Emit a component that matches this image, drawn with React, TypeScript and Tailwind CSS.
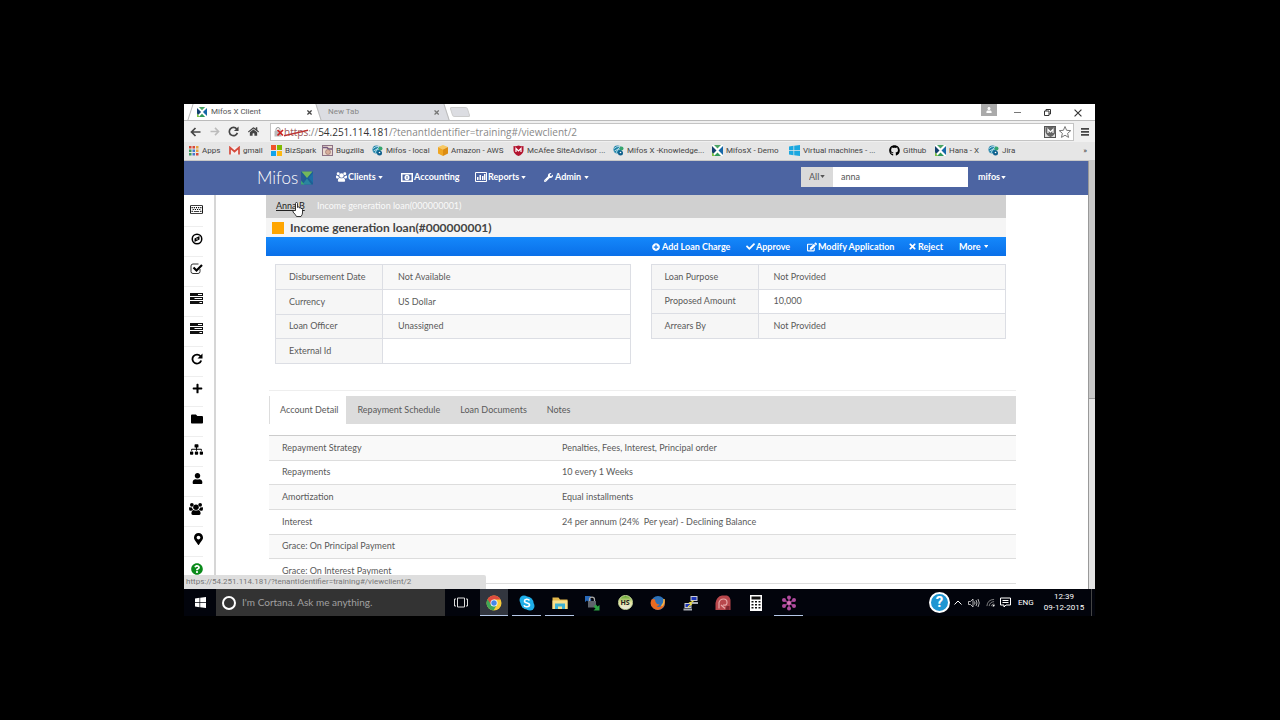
import { useState } from 'react';
import type { ReactNode } from 'react';
import {
  FaCheck,
  FaEdit,
  FaFolder,
  FaGithub,
  FaHome,
  FaMapMarkerAlt,
  FaPlus,
  FaPlusCircle,
  FaQuestionCircle,
  FaRegKeyboard,
  FaSitemap,
  FaTimes,
  FaUser,
  FaWrench,
} from 'react-icons/fa';

/* ---------- small drawings ---------- */

function MifosMark({ className = 'size-[11px]' }: { className?: string }) {
  return (
    <svg viewBox="0 0 22 22" className={`shrink-0 ${className}`} aria-hidden="true">
      <rect width="22" height="22" fill="#fff" />
      <path d="M4 0h14l-7 7z" fill="#4aa564" />
      <path d="M0 2l9 9-9 9z" fill="#12406e" />
      <path d="M22 2l-9 9 9 9z" fill="#1668a8" />
      <path d="M4 22h14l-7-7z" fill="#2f9a5b" />
      <path d="M0 14l6 8H0z" fill="#7cc243" />
    </svg>
  );
}

function LogoMark() {
  return (
    <svg viewBox="0 0 24 26" className="w-3 h-[14px]" aria-hidden="true">
      <rect width="24" height="26" fill="#1d5f94" />
      <path d="M1 0h22L12 13z" fill="#74b85a" />
      <path d="M0 2l9 11-9 10z" fill="#2a5a94" />
      <path d="M24 3l-9 10 9 10z" fill="#1d6ea6" />
      <path d="M12 14l9 12H3z" fill="#2b85a0" />
      <path d="M0 18l7 8H0z" fill="#3fa872" />
    </svg>
  );
}

function Globe() {
  return (
    <svg viewBox="0 0 22 22" className="size-[11px] shrink-0" aria-hidden="true">
      <circle cx="9" cy="9" r="8" fill="#1b7fa6" />
      <path d="M2 7q5-5 12-4M3 12q6-5 13-4M6 16q3-8 8-12" stroke="#d8f1f5" strokeWidth="1.6" fill="none" />
      <circle cx="17" cy="7" r="4" fill="#36a56e" />
      <circle cx="15" cy="16" r="5" fill="#0f5f8c" />
      <circle cx="15" cy="15" r="1.6" fill="#fff" />
    </svg>
  );
}

function AppsGrid() {
  const colors = ['#d64937', '#d64937', '#e8a33d', '#3c9a5f', '#4678d0', '#e8a33d', '#3c9a5f', '#4678d0', '#d64937'];
  return (
    <svg viewBox="0 0 20 20" className="size-[10px] shrink-0" aria-hidden="true">
      {colors.map((c, i) => (
        <rect key={i} x={(i % 3) * 7} y={Math.floor(i / 3) * 7} width="5" height="5" fill={c} />
      ))}
    </svg>
  );
}

function Gmail() {
  return (
    <svg viewBox="0 0 22 18" className="w-[11px] h-[9px] shrink-0" aria-hidden="true">
      <path d="M2 2h18v15H2z" fill="#f4eeee" />
      <path d="M2 17V3l9 8 9-8v14" fill="none" stroke="#d54b3d" strokeWidth="3.4" />
    </svg>
  );
}

function MicrosoftSquares() {
  return (
    <svg viewBox="0 0 22 22" className="size-[11px] shrink-0" aria-hidden="true">
      <path d="M0 0h10v10H0z" fill="#f0532b" />
      <path d="M12 0h10v10H12z" fill="#7fba00" />
      <path d="M0 12h10v10H0z" fill="#12a3ea" />
      <path d="M12 12h10v10H12z" fill="#fdb813" />
    </svg>
  );
}

function BugzillaIcon() {
  return (
    <svg viewBox="0 0 22 22" className="size-[11px] shrink-0" aria-hidden="true">
      <rect x="1" y="1" width="20" height="20" fill="#ead9cf" stroke="#8d7284" strokeWidth="2" />
      <path d="M2 5h8l3 3h7" stroke="#74597f" strokeWidth="3" fill="none" />
      <circle cx="12" cy="14" r="5" fill="#d8ae9c" stroke="#7e5a5a" />
    </svg>
  );
}

function AmazonCube() {
  return (
    <svg viewBox="0 0 20 22" className="w-[10px] h-[11px] shrink-0" aria-hidden="true">
      <path d="M10 0l10 4-10 5L0 4z" fill="#f8c860" />
      <path d="M0 4l10 5v13L0 17z" fill="#f0a623" />
      <path d="M20 4L10 9v13l10-5z" fill="#dd8d12" />
    </svg>
  );
}

function McAfee({ fill = '#b3152f' }: { fill?: string }) {
  return (
    <svg viewBox="0 0 22 22" className="size-[11px] shrink-0" aria-hidden="true">
      <path d="M1 2q5 1 10-1 5 2 10 1v10q-2 7-10 10Q3 19 1 12z" fill={fill} />
      <path d="M6 14V7l5 5 5-5v7" stroke="#fff" strokeWidth="2.4" fill="none" />
    </svg>
  );
}

function WindowsFlag({ className }: { className: string }) {
  return (
    <svg viewBox="0 0 22 22" className={`shrink-0 ${className}`} fill="currentColor" aria-hidden="true">
      <path d="M0 3l9-1.3V10.4H0zM10.4 1.5L22 0v10.4H10.4zM0 11.8h9v8.6L0 19zM10.4 11.8H22V22l-11.6-1.6z" />
    </svg>
  );
}

function Caret() {
  return (
    <svg viewBox="0 0 6 4" className="w-[5px] h-[3px] ml-px" fill="currentColor" aria-hidden="true">
      <path d="M0 0h6L3 4z" />
    </svg>
  );
}

function Group({ className }: { className: string }) {
  return (
    <svg viewBox="0 0 30 26" className={className} fill="currentColor" aria-hidden="true">
      <circle cx="6" cy="4" r="4" />
      <circle cx="24" cy="4" r="4" />
      <circle cx="15" cy="9" r="6" />
      <path d="M0 9q2 0 6 1 1 3 3 5-3 0-4 2H2q-2-1-2-4zM30 9q-2 0-6 1-1 3-3 5 3 0 4 2h3q2-1 2-4zM10 15q5 3 10 0 5 1 5 8 0 3-3 3H8q-3 0-3-3 0-7 5-8z" />
    </svg>
  );
}

function Banknote() {
  return (
    <svg viewBox="0 0 24 18" className="w-[12px] h-[9px]" aria-hidden="true">
      <path d="M1.500 1.500h21v15h-21z" fill="none" stroke="currentColor" strokeWidth="3" />
      <ellipse cx="12" cy="9" rx="5" ry="5.500" fill="currentColor" />
      <path d="M12 6v6" stroke="#4c64a2" strokeWidth="2" />
    </svg>
  );
}

function BarChart() {
  return (
    <svg viewBox="0 0 24 20" className="w-[12px] h-[10px]" aria-hidden="true">
      <path d="M1 1h22v18H1z" fill="none" stroke="currentColor" strokeWidth="2" />
      <path d="M4 10h3v6H4zM9 6h3v10H9zM14 8h3v8h-3zM18 4h3v12h-3z" fill="currentColor" />
    </svg>
  );
}

function Compass() {
  return (
    <svg viewBox="0 0 24 24" className="size-[12px]" aria-hidden="true">
      <circle cx="12" cy="12" r="9.500" fill="none" stroke="#000" strokeWidth="3" />
      <path d="M17 6v7l-10 5v-7z" fill="#000" />
      <circle cx="12" cy="12" r="1.500" fill="#fff" />
    </svg>
  );
}

function Tasks() {
  return (
    <svg viewBox="0 0 26 22" className="w-[13px] h-[11px]" aria-hidden="true">
      <path d="M0 0h26v6H0zM0 8h26v6H0zM0 16h26v6H0z" fill="#111" />
      <path d="M16 2h8v2h-8zM9 10h15v2H9zM19 18h5v2h-5z" fill="#fff" />
    </svg>
  );
}

function CheckBoxIcon() {
  return (
    <svg viewBox="0 0 26 22" className="w-[13px] h-[11px]" fill="none" aria-hidden="true">
      <path d="M20 12v5q0 4-4 4H6q-4 0-4-4V6q0-4 4-4h11" stroke="#333" strokeWidth="2" />
      <path d="M7 9l6 6L24 4" stroke="#000" strokeWidth="4.4" />
    </svg>
  );
}

function Repeat({ className = 'size-[12px]' }: { className?: string }) {
  return (
    <svg viewBox="0 0 24 24" className={className} aria-hidden="true">
      <path d="M19 6.5A9 9 0 1 0 20.5 15" fill="none" stroke="currentColor" strokeWidth="3.6" />
      <path d="M23 1v10H13z" fill="currentColor" />
    </svg>
  );
}

function Arrow({ className }: { className: string }) {
  return (
    <svg viewBox="0 0 22 20" className={className} fill="none" stroke="currentColor" strokeWidth="3.4" aria-hidden="true">
      <path d="M21 10H3M11 2l-8 8 8 8" />
    </svg>
  );
}

function HandCursor() {
  return (
    <svg viewBox="0 0 22 30" className="absolute left-4 top-[2px] w-[11px] h-[15px]" aria-hidden="true">
      <path
        d="M7 17V3q0-2 2-2t2 2v8q1-2 3-1 1 0 1 2 2-1 3 1 3-1 3 2v7q0 3-3 7H9q-2-4-7-9-1-3 2-3z"
        fill="#fff"
        stroke="#222"
        strokeWidth="1.8"
      />
    </svg>
  );
}

/* ---------- browser chrome ---------- */

function TabStrip() {
  return (
    <div className="flex h-4 items-stretch bg-white font-['Roboto',sans-serif] text-[8px] leading-4 text-[#555]">
      <div className="flex w-[134px] items-center pr-[5px]">
        <span className="ml-[6px] mr-[6px] h-full w-px -skew-x-[18deg] bg-[#bbb]" />
        <MifosMark className="size-[10px]" />
        <span className="ml-[4px] flex-1">Mifos X Client</span>
        <button aria-label="Close Mifos X Client" className="text-[#444]">
          <FaTimes className="size-[7px]" />
        </button>
      </div>
      <div className="flex w-[129px] skew-x-[18deg] items-center border-x border-[#bbb] bg-[#dcdde2] pl-[9px] pr-[6px]">
        <span className="flex-1 skew-x-[-18deg] text-[#888]">New Tab</span>
        <button aria-label="Close New Tab" className="skew-x-[-18deg] text-[#777]">
          <FaTimes className="size-[7px]" />
        </button>
      </div>
      <button aria-label="New tab" className="my-[3px] ml-[4px] w-[18px] skew-x-[18deg] rounded-[2px] border border-[#ccc] bg-[#dcdde2]" />
      <div className="ml-auto flex items-start text-[#333]">
        <button aria-label="Profile" className="flex h-3 w-4 items-center justify-center bg-[#aaa] text-white">
          <FaUser className="size-[6px]" />
        </button>
        <button aria-label="Minimize" className="ml-[17px] mt-2 h-px w-[7px] bg-[#777]" />
        <button aria-label="Restore" className="ml-[23px] mt-[5px]">
          <svg viewBox="0 0 14 14" className="size-[7px]" fill="none" stroke="currentColor" strokeWidth="2">
            <path d="M1 4h9v9H1zM4 4V1h9v9h-3" />
          </svg>
        </button>
        <button aria-label="Close window" className="ml-[23px] mr-[13px] mt-[5px]">
          <svg viewBox="0 0 14 14" className="size-[8px]" stroke="currentColor" strokeWidth="2">
            <path d="M1 1l12 12M13 1L1 13" />
          </svg>
        </button>
      </div>
    </div>
  );
}

function Toolbar() {
  return (
    <div className="flex h-[22px] items-center border-t border-[#bbb] bg-[#f0f0f0] text-[#444]">
      <div className="flex w-[86px] items-center justify-between pl-[6px] pr-[11px]">
        <button aria-label="Back"><Arrow className="w-[11px] h-[10px]" /></button>
        <button aria-label="Forward"><Arrow className="w-[10px] h-[9px] rotate-180 text-[#bbb]" /></button>
        <button aria-label="Reload"><Repeat className="size-[11px]" /></button>
        <button aria-label="Home"><FaHome className="size-[11px]" /></button>
      </div>
      <div className="flex h-[18px] flex-1 items-center border border-[#c4c4c4] bg-white pl-[3px] pr-[2px]">
        <svg viewBox="0 0 20 20" className="size-[10px]" aria-hidden="true">
          <path d="M4 8V5q0-4 4-4t4 4v3" fill="none" stroke="#999" strokeWidth="2" />
          <rect x="1" y="8" width="14" height="11" fill="#bbb" />
          <path d="M7 6l11 11M18 6L7 17" stroke="#c22" strokeWidth="3.500" />
        </svg>
        <p className="flex-1 whitespace-nowrap text-[10px] leading-4 text-[#888]">
          <span className="relative text-[#9b5a5a]">
            https
            <svg viewBox="0 0 26 8" className="absolute inset-x-0 top-[4px] h-[8px] w-full" aria-hidden="true">
              <path d="M0 7L26 1" stroke="#b33" strokeWidth="1.4" />
            </svg>
          </span>
          ://<span className="text-[#333]">54.251.114.181</span>/?tenantIdentifier=training#/viewclient/2
        </p>
        <span className="flex size-[12px] items-center justify-center border border-[#555] bg-[#ddd]"><McAfee fill="#666" /></span>
        <svg viewBox="0 0 24 24" className="ml-[3px] size-[12px]" fill="none" stroke="#777" strokeWidth="2" aria-hidden="true">
          <path d="M12 1l3.200 7.600 8.300.7-6.300 5.400 1.900 8.100L12 18.500l-7.100 4.300 1.900-8.100L.5 9.300l8.300-.7z" />
        </svg>
      </div>
      <button aria-label="Browser menu" className="ml-[7px] mr-[6px]">
        <svg viewBox="0 0 16 16" className="size-[8px]" fill="currentColor">
          <path d="M0 0h16v3.500H0zM0 6h16v3.500H0zM0 12h16v3.500H0z" />
        </svg>
      </button>
    </div>
  );
}

const bookmarks: { label: string; icon: ReactNode; width: string }[] = [
  { label: 'Apps', icon: <AppsGrid />, width: 'w-[40px]' },
  { label: 'gmail', icon: <Gmail />, width: 'w-[42px]' },
  { label: 'BizSpark', icon: <MicrosoftSquares />, width: 'w-[51px]' },
  { label: 'Bugzilla', icon: <BugzillaIcon />, width: 'w-[50px]' },
  { label: 'Mifos - local', icon: <Globe />, width: 'w-[66px]' },
  { label: 'Amazon - AWS', icon: <AmazonCube />, width: 'w-[75px]' },
  { label: 'McAfee SiteAdvisor ...', icon: <McAfee />, width: 'w-[100px]' },
  { label: 'Mifos X -Knowledge...', icon: <Globe />, width: 'w-[99px]' },
  { label: 'MifosX - Demo', icon: <MifosMark />, width: 'w-[77px]' },
  { label: 'Virtual machines - ...', icon: <WindowsFlag className="size-[11px] text-[#1ba8e0]" />, width: 'w-[100px]' },
  { label: 'Github', icon: <FaGithub className="size-[11px] shrink-0 text-black" />, width: 'w-[46px]' },
  { label: 'Hana - X', icon: <MifosMark />, width: 'w-[53px]' },
  { label: 'Jira', icon: <Globe />, width: 'w-[40px]' },
];

function BookmarksBar() {
  return (
    <nav
      aria-label="Bookmarks"
      className="flex h-[19px] items-center border-b border-[#c8c8c8] bg-[#e6e6e6] pb-px pl-[5px] pr-[8px] font-['Roboto',sans-serif] text-[8px] leading-3 text-[#444]"
    >
      {bookmarks.map((b) => (
        <a key={b.label} href="#" className={`flex shrink-0 items-center gap-[3px] whitespace-nowrap ${b.width}`}>
          {b.icon}
          {b.label}
        </a>
      ))}
      <button aria-label="More bookmarks" className="ml-auto">»</button>
    </nav>
  );
}

/* ---------- application ---------- */

function Navbar() {
  return (
    <header className="flex h-[34px] items-center bg-[#4c64a2] font-['Lato',sans-serif] text-[9px] leading-3 text-white">
      <a href="#" className="ml-[73px] flex w-[79px] items-center gap-[3px] text-[17px] font-light leading-5">
        Mifos
        <LogoMark />
      </a>
      <nav className="flex items-center pb-[2px] font-bold">
        <button className="flex w-[65px] items-center gap-px"><Group className="w-[11px] h-[10px]" />Clients<Caret /></button>
        <a href="#" className="flex w-[74px] items-center gap-px"><Banknote />Accounting</a>
        <button className="flex w-[69px] items-center gap-px"><BarChart />Reports<Caret /></button>
        <button className="flex items-center gap-[2px]"><FaWrench className="size-[9px]" />Admin<Caret /></button>
      </nav>
      <form className="mb-[3px] ml-auto mr-[10px] flex h-5 text-[#555]" onSubmit={(e) => e.preventDefault()}>
        <div className="relative flex w-8 items-center bg-[#dadada]">
          <select aria-label="Search scope" className="w-full appearance-none pl-[8px] outline-none">
            <option>All</option>
          </select>
          <span className="pointer-events-none absolute right-[8px]"><Caret /></span>
        </div>
        <input aria-label="Search" defaultValue="anna" className="w-[135px] bg-white px-[8px] outline-none" />
      </form>
      <button className="mb-[2px] mr-[82px] flex w-7 items-center font-bold">mifos<Caret /></button>
    </header>
  );
}

const shortcuts: { label: string; icon: ReactNode }[] = [
  { label: 'Keyboard shortcuts', icon: <FaRegKeyboard className="size-[13px]" /> },
  { label: 'Navigation', icon: <Compass /> },
  { label: 'Checker inbox', icon: <CheckBoxIcon /> },
  { label: 'Individual collection sheet', icon: <Tasks /> },
  { label: 'Collection sheet', icon: <Tasks /> },
  { label: 'Closing entries', icon: <Repeat /> },
  { label: 'Add', icon: <FaPlus className="size-[11px]" /> },
  { label: 'Accounts', icon: <FaFolder className="size-[12px]" /> },
  { label: 'Offices', icon: <FaSitemap className="size-[13px]" /> },
  { label: 'Client', icon: <FaUser className="size-[11px]" /> },
  { label: 'Groups', icon: <Group className="w-[14px] h-[12px]" /> },
  { label: 'Centers', icon: <FaMapMarkerAlt className="w-[9px] h-[12px]" /> },
  { label: 'Help', icon: <FaQuestionCircle className="size-[12px] text-[#0a8a1a]" /> },
];

function Sidebar() {
  return (
    <aside className="w-[32px] shrink-0 border-r-2 border-[#d6d6d6] bg-white pt-[2px] text-black">
      <ul className="w-[19px]">
        {shortcuts.map((s) => (
          <li key={s.label} className="h-[30px] border-b border-[#eee] pt-[6px]">
            <a href="#" aria-label={s.label} className="flex justify-end">
              {s.icon}
            </a>
          </li>
        ))}
      </ul>
    </aside>
  );
}

function SummaryTable({ rows, height }: { rows: string[][]; height: string }) {
  return (
    <table className={`w-full border-collapse border border-[#dcdee4] ${height}`}>
      <tbody>
        {rows.map(([name, value]) => (
          <tr key={name} className="border border-[#dcdee4] odd:bg-[#f8f8f8]">
            <th scope="row" className="w-[107px] border-r border-[#dcdee4] bg-[#f6f6f6] pl-[13px] text-left font-normal">{name}</th>
            <td className="pl-[15px]">{value}</td>
          </tr>
        ))}
      </tbody>
    </table>
  );
}

const summaryLeft = [
  ['Disbursement Date', 'Not Available'],
  ['Currency', 'US Dollar'],
  ['Loan Officer', 'Unassigned'],
  ['External Id', ''],
];

const summaryRight = [
  ['Loan Purpose', 'Not Provided'],
  ['Proposed Amount', '10,000'],
  ['Arrears By', 'Not Provided'],
];

const accountDetail = [
  ['Repayment Strategy', 'Penalties, Fees, Interest, Principal order'],
  ['Repayments', '10 every 1 Weeks'],
  ['Amortization', 'Equal installments'],
  ['Interest', '24 per annum (24%\u00a0 Per year) - Declining Balance'],
  ['Grace: On Principal Payment', ''],
  ['Grace: On Interest Payment', ''],
];

const tabs = ['Account Detail', 'Repayment Schedule', 'Loan Documents', 'Notes'];

function LoanPage() {
  const [active, setActive] = useState(tabs[0]);

  return (
    <main className="min-w-0 flex-1 pb-[5px] pl-[50px] pr-[72px] font-['Lato',sans-serif] text-[9px] leading-3 text-[#5a5a5a]">
      <div className="mr-[10px]">
        <nav aria-label="Breadcrumb" className="flex h-[23px] items-center bg-[#d0d0d0] pb-[2px] pl-[10px]">
          <a href="#" className="relative w-[41px] text-[#222] underline">
            Anna B
            <HandCursor />
          </a>
          <span className="text-[#fafafa]">Income generation loan(000000001)</span>
        </nav>
        <div className="flex h-[19px] items-center gap-[6px] bg-[#f5f5f5] pl-[6px]">
          <span className="size-3 bg-[#ffa500]" />
          <h1 className="text-[12px] font-bold leading-4 text-[#444]">Income generation loan(#000000001)</h1>
        </div>
        <div className="flex h-[19px] items-center justify-end bg-linear-to-b from-[#1588fb] to-[#0a6fe8] pr-[18px] font-bold text-white">
          <button className="flex w-[94px] items-center gap-[2px]"><FaPlusCircle className="size-[8px]" />Add Loan Charge</button>
          <button className="flex w-[61px] items-center gap-px"><FaCheck className="size-[9px]" />Approve</button>
          <button className="flex w-[101px] items-center gap-px"><FaEdit className="size-[10px]" />Modify Application</button>
          <button className="flex w-[51px] items-center gap-px"><FaTimes className="size-[9px]" />Reject</button>
          <button className="flex w-[29px] items-center gap-[2px]">More<Caret /></button>
        </div>
        <div className="grid grid-cols-2 items-start gap-5 pl-[9px] pt-2">
          <SummaryTable rows={summaryLeft} height="h-[100px]" />
          <SummaryTable rows={summaryRight} height="h-[75px]" />
        </div>
      </div>

      <section className="ml-[3px] mt-[26px] border-t border-[#eee] pt-[5px]">
        <div role="tablist" className="flex h-7 bg-[#dcdcdc]">
          {tabs.map((tab) => (
            <button
              key={tab}
              role="tab"
              aria-selected={tab === active}
              onClick={() => setActive(tab)}
              className={
                tab === active
                  ? 'border-l border-[#ddd] bg-white pl-[10px] pr-[7px]'
                  : 'pl-[12px] pr-[8px]'
              }
            >
              {tab}
            </button>
          ))}
        </div>
        <table className="mt-[11px] h-[149px] w-full border-collapse border-t border-[#ccc]">
          <tbody>
            {accountDetail.map(([name, value]) => (
              <tr key={name} className="border-b border-[#ddd] odd:bg-[#f9f9f9]">
                <th scope="row" className="w-[293px] pl-[13px] text-left font-normal">{name}</th>
                <td>{value}</td>
              </tr>
            ))}
          </tbody>
        </table>
      </section>
    </main>
  );
}

/* ---------- taskbar ---------- */

const taskbarApps: { label: string; state: string; icon: ReactNode }[] = [
  {
    label: 'Task view',
    state: 'border-transparent',
    icon: (
      <svg viewBox="0 0 28 22" className="w-[14px] h-[11px]" fill="none" stroke="#ddd" strokeWidth="2">
        <path d="M7 2h14v18H7zM4 4H1v14h3M24 4h3v14h-3" />
      </svg>
    ),
  },
  {
    label: 'Chrome',
    state: 'border-[#b5c8e8] bg-[#32363f]',
    icon: (
      <svg viewBox="0 0 32 32" className="size-[16px]">
        <circle cx="16" cy="16" r="15" fill="#f9cb3a" />
        <path d="M3 8.500A15 15 0 0 0 15 31l7-12-6-3z" fill="#3fa757" />
        <path d="M3 8.500L10 19l6-10h13q-4-8-13-8T3 8.500z" fill="#dd4b3e" />
        <circle cx="16" cy="16" r="7" fill="#fff" />
        <circle cx="16" cy="16" r="5.500" fill="#4687e8" />
      </svg>
    ),
  },
  {
    label: 'Skype',
    state: 'border-[#b5c8e8]',
    icon: (
      <svg viewBox="0 0 32 32" className="size-[16px]">
        <circle cx="10" cy="10" r="9" fill="#1eaee8" />
        <circle cx="22" cy="22" r="9" fill="#1eaee8" />
        <circle cx="16" cy="16" r="13" fill="#1eaee8" />
        <path d="M21 11q-2-3-6-2.500-4 .5-4 3.500t5 4 5 4-5 3.500-6-3" fill="none" stroke="#fff" strokeWidth="3.200" />
      </svg>
    ),
  },
  {
    label: 'File Explorer',
    state: 'border-[#b5c8e8]',
    icon: (
      <svg viewBox="0 0 32 32" className="size-[16px]">
        <path d="M1 5h12l3 4h15v19H1z" fill="#e3b84b" />
        <path d="M1 11h30v17H1z" fill="#f8e08c" />
        <path d="M6 28V17h20v11h-6v-5h-8v5z" fill="#3db2d4" />
      </svg>
    ),
  },
  {
    label: 'WinSCP',
    state: 'border-transparent',
    icon: (
      <svg viewBox="0 0 32 32" className="size-[16px]">
        <path d="M2 2h12l-3 4 4 4-5 5-4-4-4 3z" fill="#2768b8" />
        <path d="M11 13V9q0-5 5-5t5 5v4" fill="none" stroke="#aaa" strokeWidth="2.500" />
        <rect x="8" y="12" width="16" height="13" fill="#5e646c" />
        <path d="M31 31H19l4-4-4-4 5-4 3 4 4-3z" fill="#2da344" />
      </svg>
    ),
  },
  {
    label: 'HeidiSQL',
    state: 'border-transparent',
    icon: (
      <span className="flex size-[15px] items-center justify-center rounded-full border border-[#cfe0a0] bg-linear-to-b from-[#5ea52c] via-[#e8e6a0] to-[#e8e8e0] text-[7px] font-bold leading-none text-[#222]">
        HS
      </span>
    ),
  },
  {
    label: 'Firefox',
    state: 'border-transparent',
    icon: (
      <svg viewBox="0 0 32 32" className="size-[16px]">
        <circle cx="16" cy="16" r="14" fill="#2d70b5" />
        <path d="M3 9q-5 12 4 18 11 7 20-3 5-8 1-16 1 8-4 13-6 5-11 1 4 0 6-3-6 0-8-5l-1-5q-4-2-7 0z" fill="#ea6a1f" />
        <path d="M28 8q1 9-5 14" fill="none" stroke="#f6b545" strokeWidth="3" />
      </svg>
    ),
  },
  {
    label: 'PuTTY',
    state: 'border-transparent',
    icon: (
      <svg viewBox="0 0 32 32" className="size-[16px]">
        <path d="M15 2h14v10H15zM3 16h14v10H3z" fill="#c9ccd4" />
        <path d="M17 4h10v6H17zM5 18h10v6H5z" fill="#1c34b8" />
        <path d="M13 14h17v4H13zM1 27h17v4H1z" fill="#a8abb3" />
        <path d="M21 12l-8 4 4 2-7 6" fill="none" stroke="#f4e23a" strokeWidth="2.200" />
      </svg>
    ),
  },
  {
    label: 'Database client',
    state: 'border-transparent',
    icon: (
      <svg viewBox="0 0 32 32" className="size-[16px]">
        <path d="M1 30V16Q3 3 14 1h10q8 3 7 13v16z" fill="#b8474c" />
        <path d="M8 27V15q2-7 9-7t7 7-8 5M12 20l8 7" fill="none" stroke="#e6a7a7" strokeWidth="2.400" />
        <path d="M23 22h6v8h-8z" fill="#7f2630" />
      </svg>
    ),
  },
  {
    label: 'Calculator',
    state: 'border-transparent',
    icon: (
      <svg viewBox="0 0 24 32" className="w-[12px] h-[16px]">
        <rect width="24" height="32" fill="#fff" />
        <path
          d="M3 3h18v6H3zM3 12h4v3H3zM10 12h4v3h-4zM17 12h4v3h-4zM3 18h4v3H3zM10 18h4v3h-4zM17 18h4v3h-4zM3 24h4v3H3zM10 24h4v3h-4zM17 24h4v3h-4z"
          fill="#111"
        />
      </svg>
    ),
  },
  {
    label: 'Meeting',
    state: 'border-[#b5c8e8]',
    icon: (
      <svg viewBox="0 0 32 32" className="size-[16px]" fill="#b04a9e">
        <path d="M16 4v24M6 10l20 12M26 10L6 22" stroke="#8e3a80" strokeWidth="3" />
        <circle cx="16" cy="5" r="4" />
        <circle cx="16" cy="27" r="4" />
        <circle cx="6" cy="10" r="4" />
        <circle cx="26" cy="10" r="4" />
        <circle cx="6" cy="22" r="4" />
        <circle cx="26" cy="22" r="4" />
        <circle cx="16" cy="16" r="4" fill="#d873b8" />
      </svg>
    ),
  },
];

function Taskbar() {
  return (
    <footer className="flex h-[27px] items-stretch bg-[#02040c] text-white">
      <button aria-label="Start" className="flex w-8 items-center justify-center">
        <WindowsFlag className="size-[11px]" />
      </button>
      <label className="flex w-[229px] items-center gap-[6px] bg-[#333] pl-[6px]">
        <span className="size-[14px] shrink-0 rounded-full border-2 border-white" />
        <input
          aria-label="Ask Cortana"
          placeholder="I'm Cortana. Ask me anything."
          className="w-full bg-transparent font-['Lato',sans-serif] text-[10px] outline-none placeholder:text-[#a0a0a0]"
        />
      </label>
      <div className="flex w-[360px]">
        {taskbarApps.map((app) => (
          <button
            key={app.label}
            aria-label={app.label}
            className={`mx-[2px] flex flex-1 items-center justify-center border-b pt-px ${app.state}`}
          >
            {app.icon}
          </button>
        ))}
      </div>
      <div className="ml-auto flex items-center font-['Roboto',sans-serif] text-[8px]">
        <button aria-label="Help" className="flex size-[21px] items-center justify-center rounded-full border-2 border-white bg-[#1e96d2] text-[15px] font-bold leading-none">
          ?
        </button>
        <svg viewBox="0 0 16 10" className="ml-[4px] w-[8px] h-[5px]" fill="none" stroke="#fff" strokeWidth="2" aria-hidden="true">
          <path d="M1 9l7-7 7 7" />
        </svg>
        <svg viewBox="0 0 24 20" className="ml-[6px] w-[12px] h-[10px]" fill="none" stroke="#ddd" strokeWidth="1.600" aria-hidden="true">
          <path d="M1 7h4l5-5v16l-5-5H1zM13 7q2 3 0 6M16 4q4 6 0 12M20 2q5 8 0 16" />
        </svg>
        <svg viewBox="0 0 20 20" className="ml-[6px] size-[9px]" fill="none" stroke="#999" strokeWidth="1.800" aria-hidden="true">
          <path d="M2 18Q3 4 18 3M7 18q1-9 11-10M12 18q0-4 6-5" />
          <path d="M15 18h3v-3z" fill="#fff" stroke="#fff" />
        </svg>
        <svg viewBox="0 0 22 22" className="ml-[5px] size-[11px]" fill="none" stroke="#fff" strokeWidth="2" aria-hidden="true">
          <path d="M1 2h20v14h-9l-4 4v-4H1zM5 7h12M5 11h12" />
        </svg>
        <span className="ml-[7px] w-[24px]">ENG</span>
        <div className="w-[44px] whitespace-nowrap pb-[2px] text-center leading-[11px]">
          <div>12:39</div>
          <div>09-12-2015</div>
        </div>
        <div className="ml-[5px] mr-[3px] h-[27px] w-px bg-[#444]" />
      </div>
    </footer>
  );
}

export default function App() {
  return (
    <div className="min-h-screen bg-black py-[104px] pl-[184px] pr-[185px] font-['Open_Sans','Noto_Sans',sans-serif]">
      <div className="overflow-hidden bg-white">
        <TabStrip />
        <Toolbar />
        <BookmarksBar />
        <div className="relative flex">
          <div className="min-w-0 flex-1">
            <Navbar />
            <div className="flex">
              <Sidebar />
              <LoanPage />
            </div>
          </div>
          <div className="w-[7px] border-l border-[#999] bg-[#e4e4e4]">
            <div className="h-[238px] border-b border-[#999] bg-[#c8c8c8]" />
          </div>
          <div className="absolute bottom-0 left-0 h-[14px] w-[302px] rounded-tr-[2px] bg-[#dedede] pl-[2px] font-['Roboto',sans-serif] text-[8px] leading-[14px] text-[#777]">
            https://54.251.114.181/?tenantIdentifier=training#/viewclient/2
          </div>
        </div>
        <Taskbar />
      </div>
    </div>
  );
}
